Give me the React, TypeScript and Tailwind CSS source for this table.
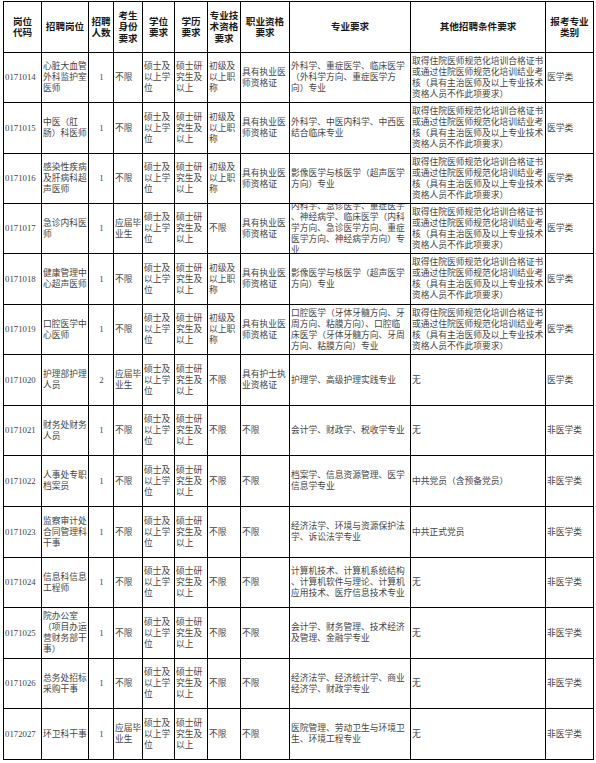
import React from "react";

const DEG = ["硕士及", "以上学", "位"];
const EDU = ["硕士研", "究生及", "以上"];
const T1 = ["初级及", "以上职", "称"];
const NO = ["不限"];
const Q1 = ["具有执业医", "师资格证"];
const O1 = [
  "取得住院医师规范化培训合格证书",
  "或通过住院医师规范化培训结业考",
  "核（具有主治医师及以上专业技术",
  "资格人员不作此项要求）",
];

type Row = {
  code: string;
  pos: string[];
  n: string;
  id: string[];
  tech: string[];
  qual: string[];
  spec: string[];
  other: string[];
  cat: string;
};

const rows: Row[] = [
  { code: "0171014", pos: ["心脏大血管", "外科监护室", "医师"], n: "1", id: NO, tech: T1, qual: Q1, spec: ["外科学、重症医学、临床医学", "（外科学方向、重症医学方", "向）专业"], other: O1, cat: "医学类" },
  { code: "0171015", pos: ["中医（肛", "肠）科医师"], n: "1", id: NO, tech: T1, qual: Q1, spec: ["外科学、中医内科学、中西医", "结合临床专业"], other: O1, cat: "医学类" },
  { code: "0171016", pos: ["感染性疾病", "及肝病科超", "声医师"], n: "1", id: NO, tech: T1, qual: Q1, spec: ["影像医学与核医学（超声医学", "方向）专业"], other: O1, cat: "医学类" },
  { code: "0171017", pos: ["急诊内科医", "师"], n: "1", id: ["应届毕", "业生"], tech: NO, qual: Q1, spec: ["内科学、急诊医学、重症医学", "、神经病学、临床医学（内科", "学方向、急诊医学方向、重症", "医学方向、神经病学方向）专", "业"], other: O1, cat: "医学类" },
  { code: "0171018", pos: ["健康管理中", "心超声医师"], n: "1", id: NO, tech: T1, qual: Q1, spec: ["影像医学与核医学（超声医学", "方向）专业"], other: O1, cat: "医学类" },
  { code: "0171019", pos: ["口腔医学中", "心医师"], n: "1", id: NO, tech: T1, qual: Q1, spec: ["口腔医学（牙体牙髓方向、牙", "周方向、粘膜方向）、口腔临", "床医学（牙体牙髓方向、牙周", "方向、粘膜方向）专业"], other: O1, cat: "医学类" },
  { code: "0171020", pos: ["护理部护理", "人员"], n: "2", id: ["应届毕", "业生"], tech: NO, qual: ["具有护士执", "业资格证"], spec: ["护理学、高级护理实践专业"], other: ["无"], cat: "医学类" },
  { code: "0171021", pos: ["财务处财务", "人员"], n: "1", id: NO, tech: NO, qual: NO, spec: ["会计学、财政学、税收学专业"], other: ["无"], cat: "非医学类" },
  { code: "0171022", pos: ["人事处专职", "档案员"], n: "1", id: NO, tech: NO, qual: NO, spec: ["档案学、信息资源管理、医学", "信息学专业"], other: ["中共党员（含预备党员）"], cat: "非医学类" },
  { code: "0171023", pos: ["监察审计处", "合同管理科", "干事"], n: "1", id: NO, tech: NO, qual: NO, spec: ["经济法学、环境与资源保护法", "学、诉讼法学专业"], other: ["中共正式党员"], cat: "非医学类" },
  { code: "0171024", pos: ["信息科信息", "工程师"], n: "1", id: NO, tech: NO, qual: NO, spec: ["计算机技术、计算机系统结构", "、计算机软件与理论、计算机", "应用技术、医疗信息技术专业"], other: ["无"], cat: "非医学类" },
  { code: "0171025", pos: ["院办公室", "（项目办运", "营财务部干", "事）"], n: "1", id: NO, tech: NO, qual: NO, spec: ["会计学、财务管理、技术经济", "及管理、金融学专业"], other: ["无"], cat: "非医学类" },
  { code: "0171026", pos: ["总务处招标", "采购干事"], n: "1", id: NO, tech: NO, qual: NO, spec: ["经济法学、经济统计学、商业", "经济学、财政学专业"], other: ["无"], cat: "非医学类" },
  { code: "0172027", pos: ["环卫科干事"], n: "1", id: ["应届毕", "业生"], tech: NO, qual: NO, spec: ["医院管理、劳动卫生与环境卫", "生、环境工程专业"], other: ["无"], cat: "非医学类" },
];

const headers: string[][] = [
  ["岗位", "代码"],
  ["招聘岗位"],
  ["招聘", "人数"],
  ["考生", "身份", "要求"],
  ["学位", "要求"],
  ["学历", "要求"],
  ["专业技", "术资格", "要求"],
  ["职业资格", "要求"],
  ["专业要求"],
  ["其他招聘条件要求"],
  ["报考专业", "类别"],
];

function Lines({ lines }: { lines: string[] }) {
  return (
    <div>
      {lines.map((l, i) => (
        <div key={i} className="whitespace-nowrap">
          {l}
        </div>
      ))}
    </div>
  );
}

const bodyCell =
  "bg-white flex items-center overflow-hidden pl-[1px] text-[8.75px] leading-[11px] text-[#454545]";

export default function App() {
  return (
    <div
      className="bg-white w-[596px] h-[763px] pt-[1px] pl-[3px]"
      style={{ fontFamily: '"Liberation Serif", "Noto Sans CJK SC", serif' }}
    >
      <div className="grid w-[591px] bg-black p-px gap-px grid-cols-[37px_46px_24px_28px_31px_32px_32px_48px_120px_134px_47px] grid-rows-[50px_49px_50px_49px_49px_50px_49px_50px_49px_50px_50px_49px_50px_49px_50px]">
        {headers.map((h, i) => (
          <div
            key={"h" + i}
            className="bg-white flex items-center justify-center text-center font-bold text-[9.6px] leading-[11.3px] text-[#1a1a1a] overflow-hidden"
            style={{ fontFamily: '"Noto Sans CJK SC", sans-serif' }}
          >
            <Lines lines={h} />
          </div>
        ))}
        {rows.map((r) => (
          <React.Fragment key={r.code}>
            <div className={bodyCell}>{r.code}</div>
            <div className={bodyCell}>
              <Lines lines={r.pos} />
            </div>
            <div className={bodyCell + " justify-center"}>{r.n}</div>
            <div className={bodyCell}>
              <Lines lines={r.id} />
            </div>
            <div className={bodyCell}>
              <Lines lines={DEG} />
            </div>
            <div className={bodyCell}>
              <Lines lines={EDU} />
            </div>
            <div className={bodyCell}>
              <Lines lines={r.tech} />
            </div>
            <div className={bodyCell}>
              <Lines lines={r.qual} />
            </div>
            <div className={bodyCell}>
              <Lines lines={r.spec} />
            </div>
            <div className={bodyCell}>
              <Lines lines={r.other} />
            </div>
            <div className={bodyCell}>{r.cat}</div>
          </React.Fragment>
        ))}
      </div>
    </div>
  );
}
